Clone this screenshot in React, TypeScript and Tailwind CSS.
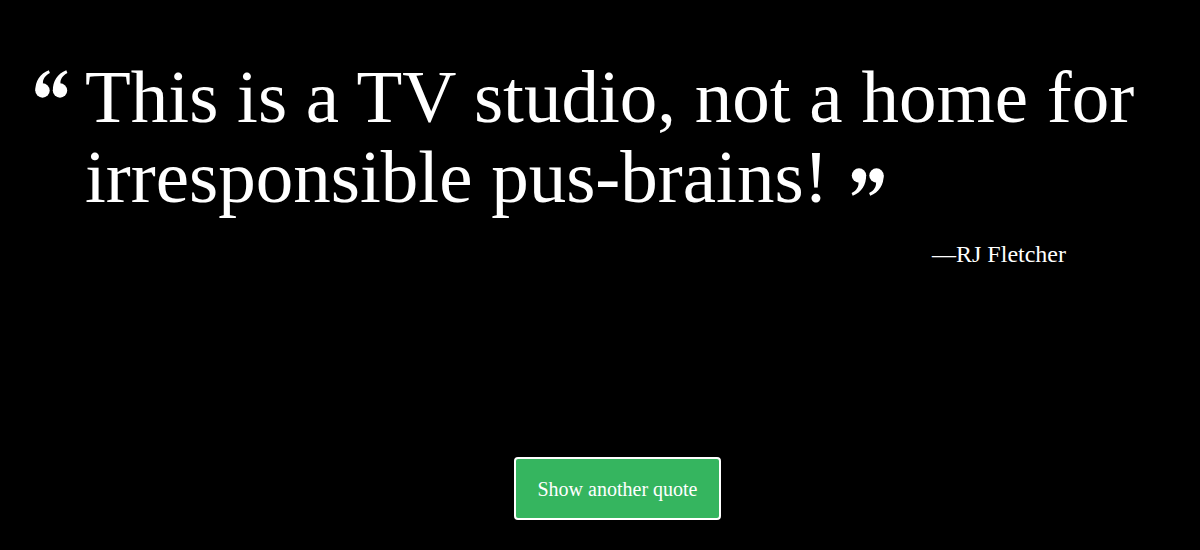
import React from 'react';

const QuoteMark: React.FC<{ close?: boolean; className?: string }> = ({ close, className }) => (
  <svg
    viewBox="0 0 33 28"
    className={className}
    fill="currentColor"
    style={close ? { transform: 'rotate(180deg)' } : undefined}
  >
    <circle cx="7.5" cy="20.5" r="7.2" />
    <path d="M0.4 21 C0.1 11 5 3.8 13.8 0.3 L14.9 3 C9.8 5.6 7.6 9.6 8 13.6 Z" />
    <circle cx="25" cy="20.5" r="7.2" />
    <path d="M17.9 21 C17.6 11 22.5 3.8 31.3 0.3 L32.4 3 C27.3 5.6 25.1 9.6 25.5 13.6 Z" />
  </svg>
);

const App: React.FC = () => {
  return (
    <div className="w-[1200px] h-[550px] bg-black text-white overflow-hidden font-['Liberation_Serif',serif]">
      <div className="pt-[57px] pl-[35px] flex">
        <QuoteMark className="w-[33px] h-[28px] mt-[13px] shrink-0" />
        <p className="ml-[17px] w-[1100px] text-[75px] leading-[80px]">
          This is a TV studio, not a home for irresponsible pus-brains!
          <QuoteMark close className="inline-block w-[33px] h-[28px] ml-[22px] align-[6px]" />
        </p>
      </div>

      <div className="mt-[21px] flex justify-end pr-[134px]">
        <span className="text-[24px] leading-[32px]">—RJ Fletcher</span>
      </div>

      <div className="mt-[187px] flex justify-center pl-[35px]">
        <button className="w-[207px] h-[63px] rounded-[4px] border-2 border-white bg-[#35b55f] text-white text-[20px] font-['Liberation_Serif',serif]">
          Show another quote
        </button>
      </div>
    </div>
  );
};

export default App;
